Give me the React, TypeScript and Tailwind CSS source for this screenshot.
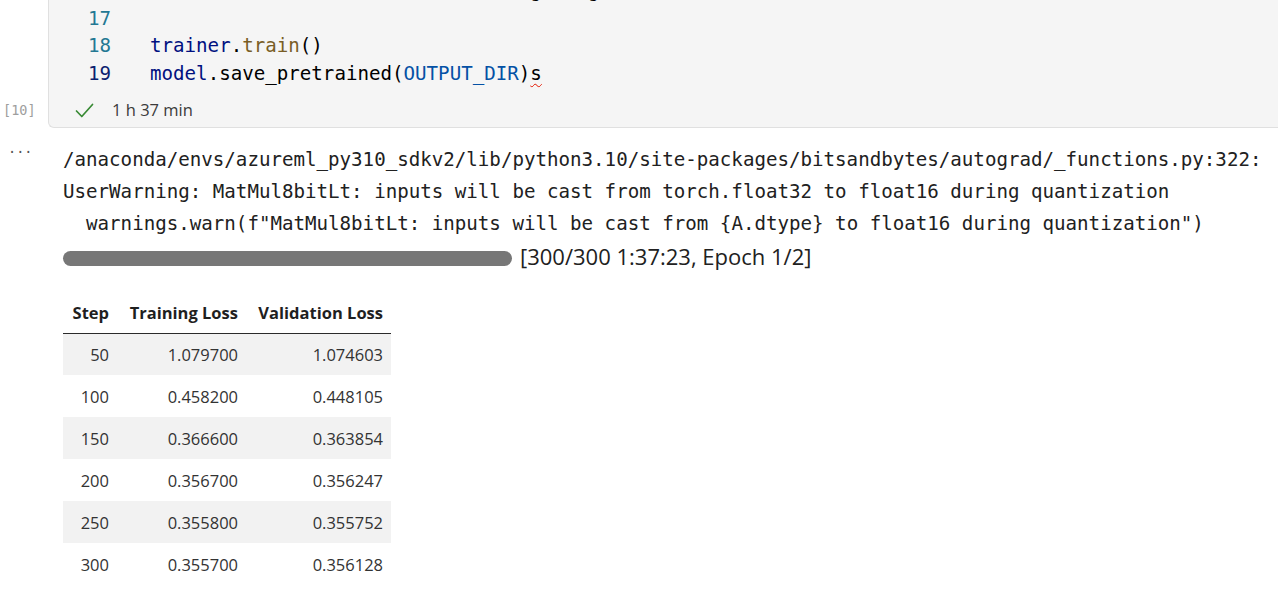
import React from "react";

const mono = { fontFamily: '"DejaVu Sans Mono", "Liberation Mono", monospace' };
const sans = { fontFamily: '"Open Sans", "Noto Sans", sans-serif' };

const rows = [
    { step: 50, train: "1.079700", val: "1.074603" },
    { step: 100, train: "0.458200", val: "0.448105" },
    { step: 150, train: "0.366600", val: "0.363854" },
    { step: 200, train: "0.356700", val: "0.356247" },
    { step: 250, train: "0.355800", val: "0.355752" },
    { step: 300, train: "0.355700", val: "0.356128" },
];

function CheckIcon() {
    return (
        <svg width="19" height="17" viewBox="0 0 19 17" fill="none">
            <path d="M1.5 9 L6.8 14.5 L17.5 2.5" stroke="#388a34" strokeWidth="1.7" strokeLinecap="round" strokeLinejoin="round" />
        </svg>
    );
}

function CodeCell() {
    return (
        <div className="flex">
            <div className="w-[48px] shrink-0 flex flex-col justify-end pb-[1px]">
                <div className="h-[34px] flex items-center pl-[3px] text-[13.5px] text-[#9e9e9e]" style={mono}>
                    [10]
                </div>
            </div>
            <div className="flex-1 -mt-[23px] bg-[#f5f5f5] border-l border-b border-[#e0e0e0] rounded-bl-[6px]">
                <div className="flex text-[19.15px] leading-[27.5px]" style={mono}>
                    <div className="w-[62px] shrink-0 text-right text-[#237893]">
                        <div>16</div>
                        <div>17</div>
                        <div>18</div>
                        <div className="text-[#0b216f]">19</div>
                    </div>
                    <div className="pl-[39px] whitespace-pre text-black">
                        <div>
                            <span className="text-[#001080]">trainer</span> = <span className="text-[#267f99]">Trainer</span>(model=<span className="text-[#001080]">model</span>, args=args)
                        </div>
                        <div>&nbsp;</div>
                        <div>
                            <span className="text-[#001080]">trainer</span>.<span className="text-[#795e26]">train</span>()
                        </div>
                        <div>
                            <span className="text-[#001080]">model</span>.save_pretrained(<span className="text-[#0451a5]">OUTPUT_DIR</span>)
                            <span className="underline decoration-wavy decoration-[#e51400] decoration-1 underline-offset-[3px]">s</span>
                        </div>
                    </div>
                </div>
                <div className="pt-[6px]">
                    <div className="h-[34px] flex items-center pl-[26px] gap-[18px] text-[16.5px] text-[#3b3b3b]" style={sans}>
                        <CheckIcon />
                        <span>1 h 37 min</span>
                    </div>
                </div>
            </div>
        </div>
    );
}

function LossTable() {
    return (
        <table className="mt-[16px] border-collapse text-[16.5px] text-[#333333]" style={sans}>
            <thead>
                <tr className="h-[41px] border-b border-[#2b2b2b]">
                    <th className="w-[55px] text-right pr-[9px] pt-[2px] font-bold text-[#1f1f1f]">Step</th>
                    <th className="w-[129px] text-right pr-[9px] pt-[2px] font-bold text-[#1f1f1f]">Training Loss</th>
                    <th className="w-[144px] text-right pr-[8px] pt-[2px] font-bold text-[#1f1f1f]">Validation Loss</th>
                </tr>
            </thead>
            <tbody>
                {rows.map((r, i) => (
                    <tr key={r.step} className={i % 2 === 0 ? "h-[42px] bg-[#f2f2f2]" : "h-[42px] bg-white"}>
                        <td className="text-right pr-[9px] pt-[2px]">{r.step}</td>
                        <td className="text-right pr-[9px] pt-[2px]">{r.train}</td>
                        <td className="text-right pr-[8px] pt-[2px]">{r.val}</td>
                    </tr>
                ))}
            </tbody>
        </table>
    );
}

function Output() {
    return (
        <div className="flex">
            <div className="w-[48px] shrink-0 pl-[8px] pt-[10px] text-[13.5px] leading-[20px] text-[#555555]" style={mono}>
                ...
            </div>
            <div className="pl-[15px] pt-[16px]">
                <div className="text-[19.15px] leading-[32px] whitespace-pre text-[#212121]" style={mono}>
                    <div>/anaconda/envs/azureml_py310_sdkv2/lib/python3.10/site-packages/bitsandbytes/autograd/_functions.py:322:</div>
                    <div>UserWarning: MatMul8bitLt: inputs will be cast from torch.float32 to float16 during quantization</div>
                    <div>  warnings.warn(f"MatMul8bitLt: inputs will be cast from {"{A.dtype}"} to float16 during quantization")</div>
                </div>
                <div className="h-[36px] flex items-center gap-[8px]">
                    <div className="w-[449px] h-[15px] rounded-full bg-[#777777]" />
                    <span className="text-[22px] text-[#212121] leading-none pb-[5px]" style={sans}>
                        [300/300 1:37:23, Epoch 1/2]
                    </span>
                </div>
                <LossTable />
            </div>
        </div>
    );
}

export default function App() {
    return (
        <div className="w-[1278px] h-[607px] overflow-hidden bg-white">
            <CodeCell />
            <Output />
        </div>
    );
}
